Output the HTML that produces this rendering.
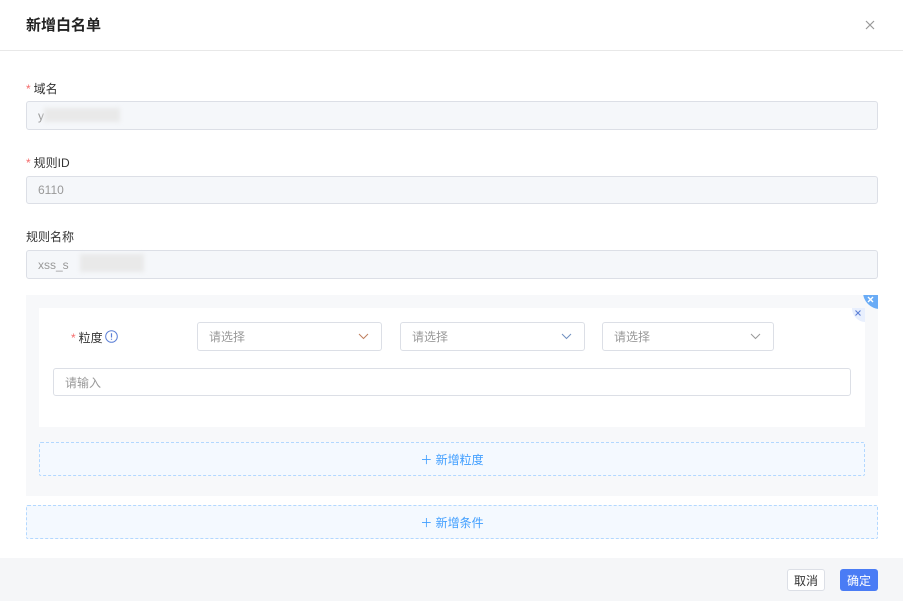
<!DOCTYPE html>
<html><head><meta charset="utf-8"><style>
*{box-sizing:border-box;margin:0;padding:0}
body{width:903px;height:601px;background:#fff;font-family:"Liberation Sans","Noto Sans CJK SC",sans-serif;font-size:12px;color:#333;position:relative;overflow:hidden}
.a{position:absolute}
.title{left:26px;top:14px;font-size:15px;font-weight:bold;color:#222}
.hline{left:0;top:50px;width:903px;height:1px;background:#e8e8e8}
.lbl{font-size:12px;color:#333}
.req{color:#f56c6c;margin-right:3px}
.inp{border:1px solid #dcdfe6;border-radius:3px;background:#f5f7fa;color:#999;padding-left:11px;display:flex;align-items:center}
.sel{border:1px solid #dcdfe6;border-radius:3px;background:#fff;color:#999;padding-left:11px;display:flex;align-items:center;font-size:12px}
.sel svg{position:absolute;right:12px;top:10px}
.dash{border:1px dashed #b3d8ff;background:#f4f9ff;color:#409eff;display:flex;align-items:center;justify-content:center;font-size:12px;border-radius:2px}
.blur{background:#e9e9e9;filter:blur(2px)}
</style></head><body>
<div class="a title">新增白名单</div>
<svg class="a" style="left:865px;top:20px" width="10" height="10" viewBox="0 0 10 10"><path d="M1 1L9 9M9 1L1 9" stroke="#999" stroke-width="1.2"/></svg>
<div class="a hline"></div>

<div class="a lbl" style="left:26px;top:80px"><span class="req">*</span>域名</div>
<div class="a inp" style="left:26px;top:101px;width:852px;height:29px">y</div>
<div class="a blur" style="left:44px;top:108px;width:76px;height:14px"></div>

<div class="a lbl" style="left:26px;top:154px"><span class="req">*</span>规则ID</div>
<div class="a inp" style="left:26px;top:176px;width:852px;height:28px">6110</div>

<div class="a lbl" style="left:26px;top:228px">规则名称</div>
<div class="a inp" style="left:26px;top:250px;width:852px;height:29px">xss_s</div>
<div class="a blur" style="left:80px;top:254px;width:64px;height:18px"></div>

<div class="a" style="left:26px;top:295px;width:852px;height:201px;background:#f7f8fa;overflow:hidden">
  <div class="a" style="left:837px;top:-20px;width:34px;height:34px;border-radius:50%;background:#6aacf6"></div>
  <svg class="a" style="left:841px;top:1px" width="7" height="7" viewBox="0 0 7 7"><path d="M1 1L6 6M6 1L1 6" stroke="#fff" stroke-width="1.4"/></svg>
</div>
<div class="a" style="left:39px;top:308px;width:826px;height:119px;background:#fff;overflow:hidden">
  <div class="a" style="left:813px;top:-13px;width:27px;height:27px;border-radius:50%;background:#e8effd"></div>
  <svg class="a" style="left:816px;top:2px" width="6" height="6" viewBox="0 0 6 6"><path d="M.5 .5L5.5 5.5M5.5 .5L.5 5.5" stroke="#5b7fd6" stroke-width="1.1"/></svg>
</div>
<div class="a lbl" style="left:71px;top:329px"><span class="req">*</span>粒度</div>
<svg class="a" style="left:105px;top:330px" width="13" height="13" viewBox="0 0 13 13"><circle cx="6.5" cy="6.5" r="5.8" fill="none" stroke="#5b7fd6" stroke-width="1"/><path d="M6.5 3.2v4.3M6.5 8.8v1" stroke="#5b7fd6" stroke-width="1.2"/></svg>
<div class="a sel" style="left:197px;top:322px;width:185px;height:29px">请选择<svg width="11" height="7" viewBox="0 0 11 7"><path d="M1 1l4.5 4.5L10 1" fill="none" stroke="#c08060" stroke-width="1"/></svg></div>
<div class="a sel" style="left:400px;top:322px;width:185px;height:29px">请选择<svg width="11" height="7" viewBox="0 0 11 7"><path d="M1 1l4.5 4.5L10 1" fill="none" stroke="#7090c0" stroke-width="1"/></svg></div>
<div class="a sel" style="left:602px;top:322px;width:172px;height:29px">请选择<svg width="11" height="7" viewBox="0 0 11 7"><path d="M1 1l4.5 4.5L10 1" fill="none" stroke="#999" stroke-width="1"/></svg></div>
<div class="a sel" style="left:53px;top:368px;width:798px;height:28px">请输入</div>

<div class="a dash" style="left:39px;top:442px;width:826px;height:34px">＋ 新增粒度</div>
<div class="a dash" style="left:26px;top:505px;width:852px;height:34px">＋ 新增条件</div>

<div class="a" style="left:0;top:558px;width:903px;height:43px;background:#f5f6f8"></div>
<div class="a" style="left:787px;top:569px;width:38px;height:22px;border:1px solid #dcdfe6;border-radius:3px;background:#fff;display:flex;align-items:center;justify-content:center;color:#333">取消</div>
<div class="a" style="left:840px;top:569px;width:38px;height:22px;border-radius:3px;background:#4a7cf5;display:flex;align-items:center;justify-content:center;color:#fff">确定</div>
</body></html>
